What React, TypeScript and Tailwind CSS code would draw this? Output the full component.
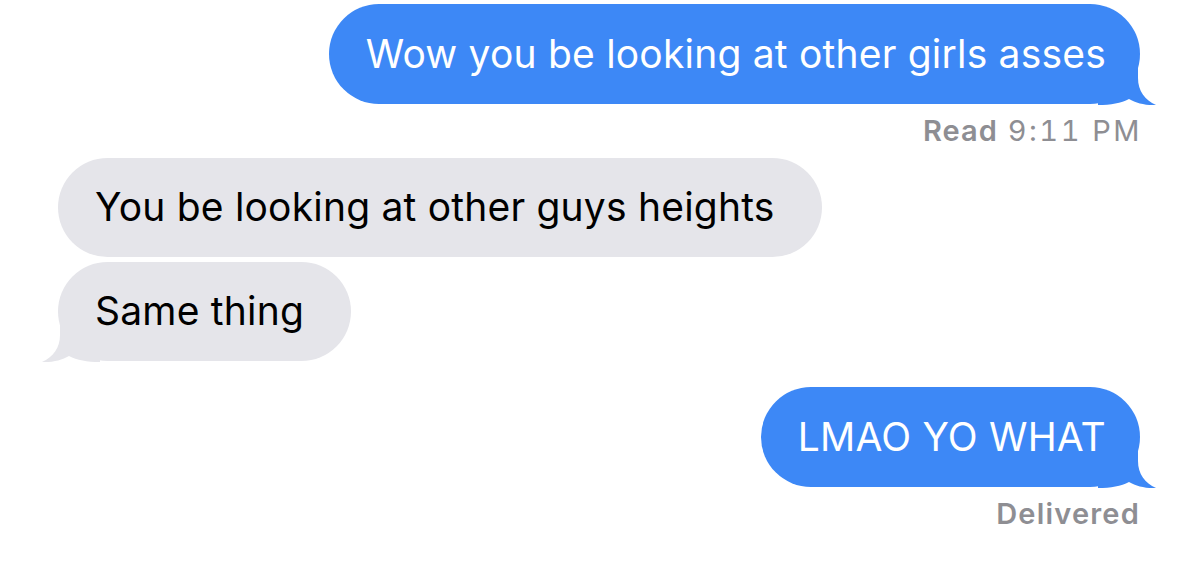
import React from "react"

const BLUE = "#3d88f6"
const GRAY = "#e5e5ea"

function Tail({ side, color }: { side: "left" | "right"; color: string }) {
  const right = side === "right"
  return (
    <svg
      width="60"
      height="52"
      viewBox="0 0 60 52"
      className={`absolute bottom-[-2px] ${right ? "right-[-18px]" : "left-[-18px] -scale-x-100"}`}
    >
      <path
        d="M0 0 L40 0 L40 24 C40 37 47 46 58 51 C47 51.5 38 49 31 45 C23 49 13 51 0 51 Z"
        fill={color}
      />
    </svg>
  )
}

function Bubble({
  text,
  mine,
  tail,
}: {
  text: string
  mine?: boolean
  tail?: boolean
}) {
  return (
    <div
      className={`relative flex items-center rounded-[50px] pl-[37px] text-[39px] tracking-[0.2px] ${
        mine ? "h-[100px] bg-[#3d88f6] pr-[34px] text-white" : "h-[99px] bg-[#e5e5ea] pr-[47px] text-black"
      }`}
    >
      {tail && <Tail side={mine ? "right" : "left"} color={mine ? BLUE : GRAY} />}
      <span className="relative">{text}</span>
    </div>
  )
}

export default function App() {
  return (
    <div
      className="flex h-[566px] w-[1200px] flex-col bg-white pt-[4px]"
      style={{ fontFamily: "Inter, 'Liberation Sans', sans-serif" }}
    >
      <div className="flex justify-end pr-[60px]">
        <Bubble text="Wow you be looking at other girls asses" mine tail />
      </div>
      <div className="mt-[9px] flex justify-end pr-[58px] text-[29px] leading-[36px] text-[#8e8e93]">
        <span className="font-semibold tracking-[1px]">Read</span>
        <span className="ml-[10px] tracking-[2.5px] tabular-nums">9:11 PM</span>
      </div>
      <div className="mt-[9px] flex flex-col items-start gap-[5px] pl-[58px]">
        <Bubble text="You be looking at other guys heights" />
        <Bubble text="Same thing" tail />
      </div>
      <div className="mt-[26px] flex justify-end pr-[60px]">
        <Bubble text="LMAO YO WHAT" mine tail />
      </div>
      <div className="mt-[9px] flex justify-end pr-[60px] text-[29px] font-semibold leading-[36px] tracking-[1.2px] text-[#8e8e93]">
        Delivered
      </div>
    </div>
  )
}
